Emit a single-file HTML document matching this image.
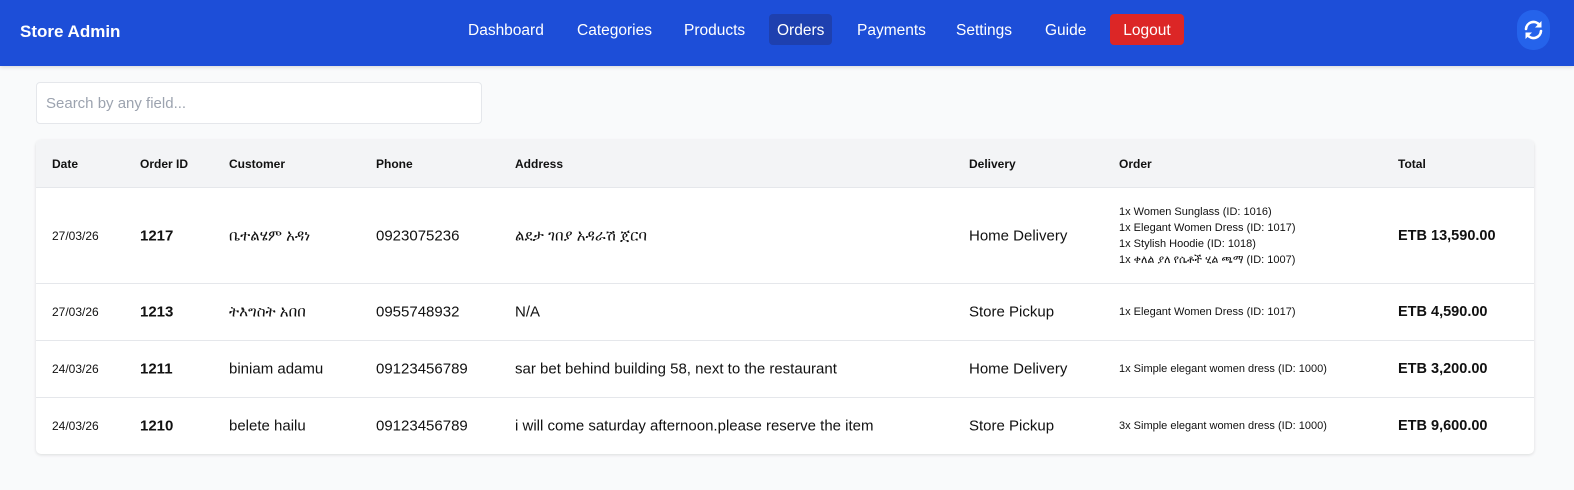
<!DOCTYPE html>
<html><head><meta charset="utf-8"><style>
*{box-sizing:border-box;margin:0;padding:0}
body{width:1574px;height:490px;background:#f9fafb;font-family:"Liberation Sans","Noto Sans CJK SC",sans-serif;color:#111;position:relative;overflow:hidden}
.nav{position:absolute;left:0;top:0;width:1574px;height:66px;background:#1d4ed8;box-shadow:0 1px 4px rgba(0,0,0,.15)}
.brand{position:absolute;left:20px;top:22px;color:#fff;font-weight:bold;font-size:17px}
.nav a{position:absolute;top:14px;height:31px;line-height:33px;color:#fff;font-size:15.5px;padding:0 8px;border-radius:4px}
.ref{position:absolute;left:1517px;top:10px;width:33px;height:40px;border-radius:16px;background:#2563eb}
.search{position:absolute;left:36px;top:82px;width:446px;height:42px;background:#fff;border:1px solid #e5e7eb;border-radius:4px;font-size:15px;color:#9ca3af;padding:12px 9px}
.card{position:absolute;left:36px;top:140px;width:1498px;height:314px;background:#fff;border-radius:5px;box-shadow:0 1px 3px rgba(0,0,0,.12);overflow:hidden}
.hd{position:absolute;left:0;top:0;width:100%;height:47px;background:#f3f4f6}
.row{position:absolute;left:0;width:100%;border-top:1px solid #e5e7eb}
.c{position:absolute;transform:translateY(-50%);white-space:nowrap}
.h{font-size:12px;font-weight:bold;top:24px}
.d{font-size:12px}.id{font-size:15px;font-weight:bold}.t{font-size:15px}
.o{font-size:11px;line-height:16px}
.tot{font-size:14.5px;font-weight:bold}
</style></head><body>
<div class="nav">
<div class="brand">Store Admin</div>
<a style="left:460px">Dashboard</a>
<a style="left:569px">Categories</a>
<a style="left:676px">Products</a>
<a style="left:769px;background:#1e40af">Orders</a>
<a style="left:849px">Payments</a>
<a style="left:948px">Settings</a>
<a style="left:1037px">Guide</a>
<a style="left:1110px;width:74px;background:#dc2626;text-align:center;padding:0">Logout</a>
<div class="ref"><svg width="33" height="40" viewBox="0 0 33 40"><g fill="none" stroke="#fff" stroke-width="2.6" stroke-linecap="round"><path d="M9 19a7.5 7.5 0 0 1 13.5-4"/><path d="M24 21a7.5 7.5 0 0 1-13.5 4"/></g><path d="M24.5 11v6.5h-6.5z" fill="#fff"/><path d="M8.5 29v-6.5h6.5z" fill="#fff"/></svg></div>
</div>
<div class="search">Search by any field...</div>
<div class="card">
<div class="hd">
<div class="c h" style="left:16px">Date</div><div class="c h" style="left:104px">Order ID</div><div class="c h" style="left:193px">Customer</div><div class="c h" style="left:340px">Phone</div><div class="c h" style="left:479px">Address</div><div class="c h" style="left:933px">Delivery</div><div class="c h" style="left:1083px">Order</div><div class="c h" style="left:1362px">Total</div>
</div>
<div class="row" style="top:47px;height:96px">
<div class="c d" style="left:16px;top:48px">27/03/26</div><div class="c id" style="left:104px;top:48px">1217</div><div class="c t" style="left:193px;top:48px">ቤተልሄም አዳነ</div><div class="c t" style="left:340px;top:48px">0923075236</div><div class="c t" style="left:479px;top:48px">ልደታ ገበያ አዳራሽ ጀርባ</div><div class="c t" style="left:933px;top:48px">Home Delivery</div>
<div class="c o" style="left:1083px;top:48px">1x Women Sunglass (ID: 1016)<br>1x Elegant Women Dress (ID: 1017)<br>1x Stylish Hoodie (ID: 1018)<br>1x ቀለል ያለ የሴቶች ሂል ጫማ (ID: 1007)</div>
<div class="c tot" style="left:1362px;top:48px">ETB 13,590.00</div>
</div>
<div class="row" style="top:143px;height:57px">
<div class="c d" style="left:16px;top:28px">27/03/26</div><div class="c id" style="left:104px;top:28px">1213</div><div class="c t" style="left:193px;top:28px">ትእግስት አበበ</div><div class="c t" style="left:340px;top:28px">0955748932</div><div class="c t" style="left:479px;top:28px">N/A</div><div class="c t" style="left:933px;top:28px">Store Pickup</div><div class="c o" style="left:1083px;top:28px">1x Elegant Women Dress (ID: 1017)</div><div class="c tot" style="left:1362px;top:28px">ETB 4,590.00</div>
</div>
<div class="row" style="top:200px;height:57px">
<div class="c d" style="left:16px;top:28px">24/03/26</div><div class="c id" style="left:104px;top:28px">1211</div><div class="c t" style="left:193px;top:28px">biniam adamu</div><div class="c t" style="left:340px;top:28px">09123456789</div><div class="c t" style="left:479px;top:28px">sar bet behind building 58, next to the restaurant</div><div class="c t" style="left:933px;top:28px">Home Delivery</div><div class="c o" style="left:1083px;top:28px">1x Simple elegant women dress (ID: 1000)</div><div class="c tot" style="left:1362px;top:28px">ETB 3,200.00</div>
</div>
<div class="row" style="top:257px;height:57px">
<div class="c d" style="left:16px;top:28px">24/03/26</div><div class="c id" style="left:104px;top:28px">1210</div><div class="c t" style="left:193px;top:28px">belete hailu</div><div class="c t" style="left:340px;top:28px">09123456789</div><div class="c t" style="left:479px;top:28px">i will come saturday afternoon.please reserve the item</div><div class="c t" style="left:933px;top:28px">Store Pickup</div><div class="c o" style="left:1083px;top:28px">3x Simple elegant women dress (ID: 1000)</div><div class="c tot" style="left:1362px;top:28px">ETB 9,600.00</div>
</div>
</div>
</body></html>
